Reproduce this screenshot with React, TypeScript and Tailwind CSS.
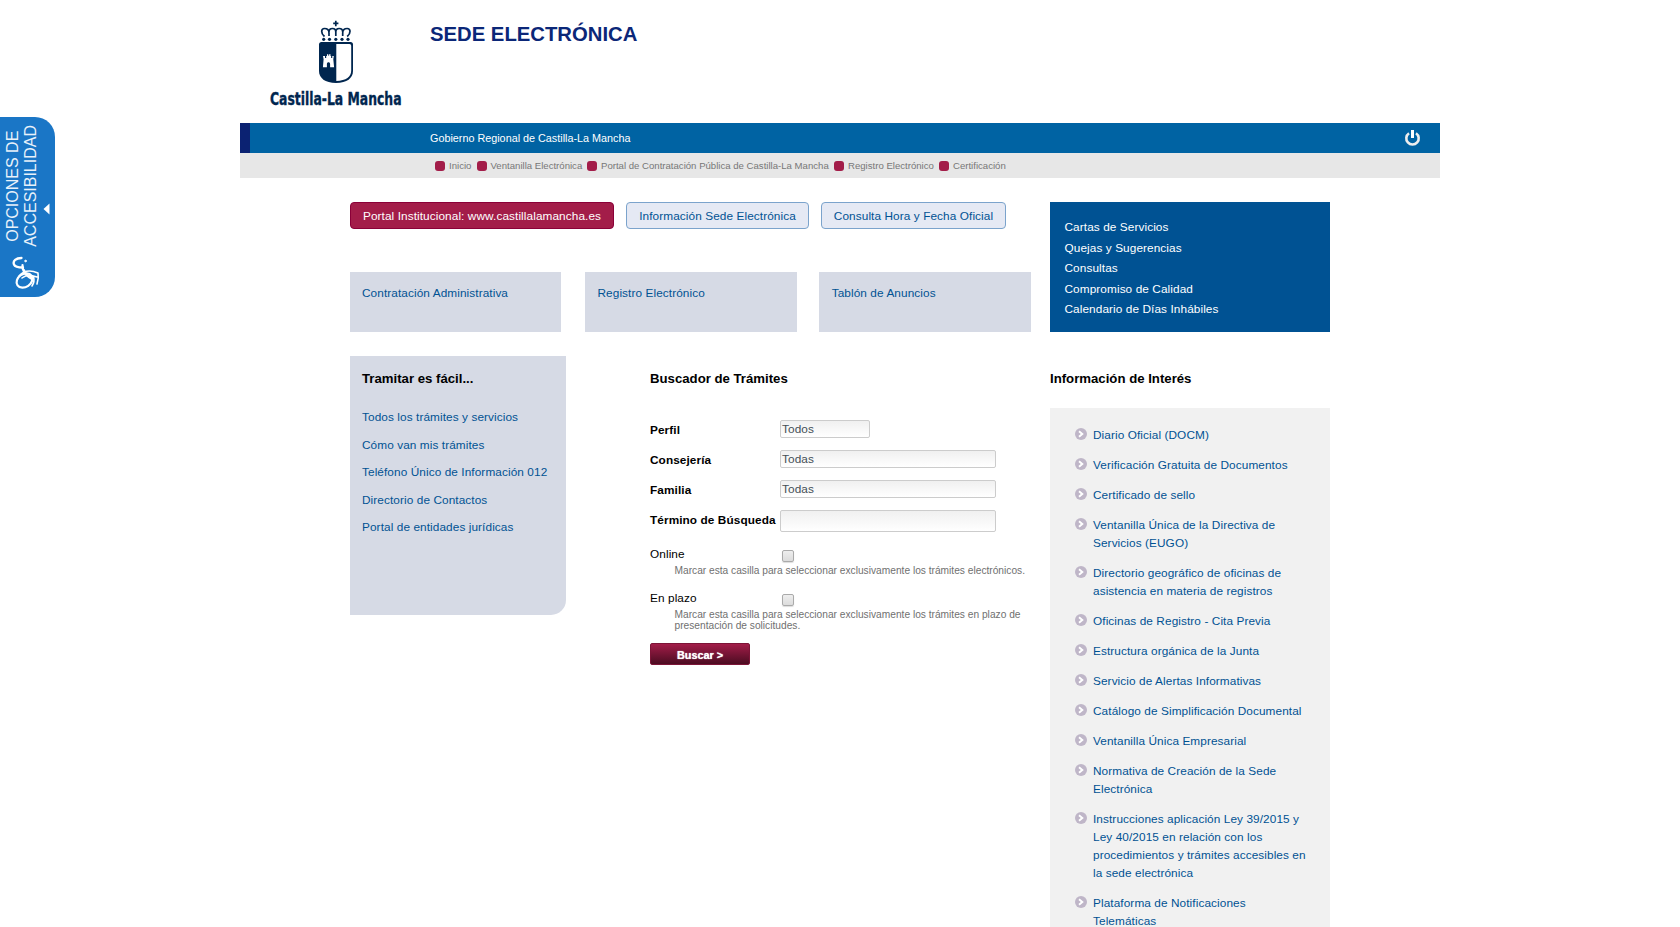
import React from "react";

const crumbs = [
  { label: "Inicio", width: "w-[41.5px]" },
  { label: "Ventanilla Electrónica", width: "w-[110.5px]" },
  { label: "Portal de Contratación Pública de Castilla-La Mancha", width: "w-[247px]" },
  { label: "Registro Electrónico", width: "w-[105px]" },
  { label: "Certificación", width: "w-[80px]" },
];

const services = [
  "Cartas de Servicios",
  "Quejas y Sugerencias",
  "Consultas",
  "Compromiso de Calidad",
  "Calendario de Días Inhábiles",
];

const easyLinks = [
  "Todos los trámites y servicios",
  "Cómo van mis trámites",
  "Teléfono Único de Información 012",
  "Directorio de Contactos",
  "Portal de entidades jurídicas",
];

const interestLinks = [
  ["Diario Oficial (DOCM)"],
  ["Verificación Gratuita de Documentos"],
  ["Certificado de sello"],
  ["Ventanilla Única de la Directiva de", "Servicios (EUGO)"],
  ["Directorio geográfico de oficinas de", "asistencia en materia de registros"],
  ["Oficinas de Registro - Cita Previa"],
  ["Estructura orgánica de la Junta"],
  ["Servicio de Alertas Informativas"],
  ["Catálogo de Simplificación Documental"],
  ["Ventanilla Única Empresarial"],
  ["Normativa de Creación de la Sede", "Electrónica"],
  [
    "Instrucciones aplicación Ley 39/2015 y",
    "Ley 40/2015 en relación con los",
    "procedimientos y trámites accesibles en",
    "la sede electrónica",
  ],
  ["Plataforma de Notificaciones", "Telemáticas"],
];

function Logo() {
  return (
    <svg width="140" height="95" viewBox="265 15 140 95" className="block overflow-visible">
      <g fill="none" stroke="#00264f" strokeWidth="1.700">
        <path d="M335.800 20.700v5.500M333.200 23.300h5.200" />
        <path d="M324.500 36.500c-4-3.500-3.500-8 0-8s4.500 2 4.500 4.500V36M329 32c0-2.500 1-3.500 3.500-3.500s3.300 1 3.300 3.500v4M347.200 36.500c4-3.500 3.500-8 0-8s-4.500 2-4.500 4.500V36M342.700 32c0-2.500-1-3.500-3.500-3.500s-3.400 1-3.400 3.500" />
      </g>
      <g fill="#00264f">
        <circle cx="323.700" cy="39.300" r="1.600" />
        <circle cx="329.500" cy="39.300" r="1.600" />
        <circle cx="335.800" cy="39.300" r="1.600" />
        <circle cx="342" cy="39.300" r="1.600" />
        <circle cx="348" cy="39.300" r="1.600" />
        <path d="M321.500 42h29a2.500 2.500 0 0 1 2.500 2.500V71c0 7-6 12-17 12s-17-5-17-12V44.500a2.500 2.500 0 0 1 2.500-2.500z" />
      </g>
      <path
        d="M336.300 44h13.200a1.700 1.700 0 0 1 1.700 1.700V70.500c0 6-5 10.300-14.900 10.500z"
        fill="#fff"
      />
      <path
        d="M323 56h2v2h1.200v-2h.8v-1.800h1.300v1.500h.8v-1.500h1.400V56h.6v2h1.200v-2h1.500l-.5 3.200.8 8h-4V64c0-2.200-3.200-2.200-3.200 0v3.200h-4l.7-8z"
        fill="#fff"
      />
      <text
        x="270"
        y="104.600"
        textLength="131.500"
        lengthAdjust="spacingAndGlyphs"
        fill="#00264f"
        stroke="#00264f"
        strokeWidth="0.350"
        fontFamily="'DejaVu Sans Condensed', 'DejaVu Sans', sans-serif"
        fontWeight="700"
        fontSize="17"
      >
        Castilla-La Mancha
      </text>
    </svg>
  );
}

function Bullet() {
  return (
    <svg width="12" height="12" viewBox="0 0 12 12" className="mt-[2px] block shrink-0">
      <circle cx="6" cy="6" r="6" fill="#bfb6c8" />
      <path d="M4 3.300 7.300 6 4 8.700" fill="none" stroke="#fff" strokeWidth="1.900" />
    </svg>
  );
}

function Field({ label, value, size }: { label: string; value: string; size: string }) {
  return (
    <div className="flex h-[30px] items-start">
      <div className="w-[130px] pt-[1px] leading-[18px] font-bold whitespace-nowrap">{label}</div>
      <div
        className={`${size} rounded-[2px] border border-[#ccc] bg-linear-to-b from-[#f0f0f0] to-white pl-[1px] leading-[16px] text-[#444f56]`}
      >
        {value}
      </div>
    </div>
  );
}

function CheckRow({ label, lines }: { label: string; lines: string[] }) {
  return (
    <div className="h-[44px]">
      <div className="flex h-[18px] items-start leading-[18px]">
        <span className="w-[132px]">{label}</span>
        <span className="mt-[5px] block h-[12px] w-[12px] rounded-[2px] border border-[#aaa] bg-linear-to-b from-[#eee] to-[#dcdcdc] shadow-[0_1px_1px_#ddd]" />
      </div>
      <div className="pt-[2px] pl-[24.500px] text-[10.200px] leading-[11px] tracking-normal whitespace-nowrap text-[#707070]">
        {lines.map((l) => (
          <div key={l}>{l}</div>
        ))}
      </div>
    </div>
  );
}

function AccessibilityTab() {
  return (
    <aside className="absolute top-[116.500px] left-0 flex h-[180.500px] w-[55px] flex-col items-center rounded-r-[20px] bg-[#1a76c6] tracking-normal text-white">
      <div className="flex h-[138px] w-full items-center pl-[4px]">
        <div className="rotate-180 text-center text-[16px] leading-[18px] whitespace-nowrap text-[#e8f1fa] [writing-mode:vertical-rl]">
          OPCIONES DE
          <br />
          ACCESIBILIDAD
        </div>
        <svg width="7" height="12" viewBox="0 0 7 12" className="mt-[46px] ml-[3px] shrink-0">
          <path d="M6.500 0.500v11L0.500 6z" fill="#fff" />
        </svg>
      </div>
      <svg width="28" height="34" viewBox="0 0 28 34" className="mt-[1px] -ml-[3px]" fill="none" stroke="#fff" strokeLinecap="round">
        <path d="M9.500 2C4 2 .5 5 2 8.500c1 2.500 4 3 9 3" strokeWidth="2.300" />
        <path d="M10.500 9C10 14 12 18 19 21M12 14c1 4 4 7 8 9" strokeWidth="2.200" />
        <ellipse cx="12.500" cy="24.500" rx="8.500" ry="6.500" transform="rotate(-35 12.500 24.500)" strokeWidth="2.200" />
        <path d="M7 20c5-6 12-6 19-3M10 22c5-4 9-3 15-1M26 17c.8 4 .3 7-1 11M21.500 21c1 3 .5 6-1.500 9" strokeWidth="1.600" />
        <circle cx="13.500" cy="5" r=".8" fill="#fff" strokeWidth="1" />
      </svg>
    </aside>
  );
}

export default function App() {
  return (
    <div className="relative h-[927px] w-full overflow-hidden bg-white font-['Liberation_Sans',Arial,sans-serif] text-[11.800px] tracking-[0.090px] text-black [font-feature-settings:'liga'_1]">
      <AccessibilityTab />
      <div className="mx-auto w-[1200px]">
        <header className="flex h-[123px] items-start pt-[15px] pl-[25px] tracking-normal">
          <Logo />
          <h1 className="mt-[7px] ml-[25px] text-[20.300px] leading-[24px] font-bold whitespace-nowrap text-[#0b2778]">
            SEDE ELECTRÓNICA
          </h1>
        </header>

        <div className="flex h-[30px] items-center justify-between border-l-[10px] border-[#0b2272] bg-[#0063a3] pr-[19px] pl-[180px] text-[10.800px] tracking-normal text-white">
          <span>Gobierno Regional de Castilla-La Mancha</span>
          <svg width="17" height="18" viewBox="0 0 17 18" fill="none" stroke="#eee">
            <path d="M5 4.200a6.200 6.200 0 1 0 7 0" strokeWidth="2.600" />
            <path d="M8.500 1v8" strokeWidth="3" stroke="#fff" />
          </svg>
        </div>

        <nav className="flex h-[25px] items-center bg-[#e7e7e7] pt-[1px] pl-[195px] text-[9.600px] tracking-normal text-[#777]">
          {crumbs.map((c) => (
            <span key={c.label} className={`${c.width} flex items-center gap-[4px] whitespace-nowrap`}>
              <i className="block h-[10px] w-[10px] shrink-0 rounded-[3px] bg-[#a31d49]" />
              {c.label}
            </span>
          ))}
        </nav>

        <main className="pt-[24px] pl-[110px]">
          <div className="flex h-[130px]">
            <div className="flex w-[700px] flex-col justify-between">
              <div className="flex gap-[12px] leading-[18px] whitespace-nowrap">
                <a className="h-[27px] w-[264px] rounded-[4px] border border-[#8a0038] bg-[#a31d49] pt-[4px] text-center text-white">
                  Portal Institucional: www.castillalamancha.es
                </a>
                <a className="h-[27px] w-[183px] rounded-[4px] border border-[#7ba3cc] bg-[#e5e9f4] pt-[4px] text-center text-[#005293]">
                  Información Sede Electrónica
                </a>
                <a className="h-[27px] w-[185px] rounded-[4px] border border-[#7ba3cc] bg-[#e5e9f4] pt-[4px] text-center text-[#005293]">
                  Consulta Hora y Fecha Oficial
                </a>
              </div>
              <div className="flex leading-[18px] text-[#005293]">
                <div className="mr-[24px] h-[60px] w-[211px] bg-[#d6dae5] p-[12px]">Contratación Administrativa</div>
                <div className="mr-[22px] h-[60px] w-[212px] bg-[#d6dae5] py-[12px] pl-[12.500px]">Registro Electrónico</div>
                <div className="h-[60px] w-[212px] bg-[#d6dae5] py-[12px] pl-[12.700px]">Tablón de Anuncios</div>
              </div>
            </div>
            <ul className="w-[280px] bg-[#005293] pt-[15px] pl-[14.500px] leading-[20.500px] text-white">
              {services.map((s) => (
                <li key={s}>{s}</li>
              ))}
            </ul>
          </div>

          <div className="mt-[24px] flex items-start">
            <section className="h-[259px] w-[216px] rounded-br-[15px] bg-[#d6dae5] pt-[14px] pl-[12px]">
              <h2 className="text-[13.200px] leading-[18px] font-bold tracking-normal">Tramitar es fácil...</h2>
              <ul className="mt-[16px] leading-[27.500px] whitespace-nowrap text-[#005293]">
                {easyLinks.map((l) => (
                  <li key={l}>{l}</li>
                ))}
              </ul>
            </section>

            <section className="ml-[84px] w-[400px] pt-[14px]">
              <h2 className="h-[50px] text-[13.200px] leading-[18px] font-bold tracking-normal">Buscador de Trámites</h2>
              <Field label="Perfil" value="Todos" size="h-[18px] w-[90px]" />
              <Field label="Consejería" value="Todas" size="h-[18px] w-[216px]" />
              <Field label="Familia" value="Todas" size="h-[18px] w-[216px]" />
              <Field label="Término de Búsqueda" value="" size="h-[22px] w-[216px]" />
              <div className="mt-[5px]">
                <CheckRow
                  label="Online"
                  lines={["Marcar esta casilla para seleccionar exclusivamente los trámites electrónicos."]}
                />
                <CheckRow
                  label="En plazo"
                  lines={[
                    "Marcar esta casilla para seleccionar exclusivamente los trámites en plazo de",
                    "presentación de solicitudes.",
                  ]}
                />
              </div>
              <button className="mt-[10px] block h-[22px] w-[100px] rounded-[2px] border border-[#7c1437] bg-linear-to-b from-[#a31d49] to-[#4d0c22] pt-[2px] text-[10.800px] leading-[19px] font-bold tracking-normal text-white [text-shadow:0_0_1px_#fff]">
                Buscar &gt;
              </button>
            </section>

            <section className="w-[280px] pt-[14px]">
              <h2 className="h-[38px] text-[13.200px] leading-[18px] font-bold tracking-normal">Información de Interés</h2>
              <ul className="flex h-[540px] flex-col gap-[12px] bg-[#f1f1f1] pt-[18px] pl-[25px] leading-[18px] whitespace-nowrap text-[#005293]">
                {interestLinks.map((lines) => (
                  <li key={lines[0]} className="flex items-start gap-[6px]">
                    <Bullet />
                    <span>
                      {lines.map((l) => (
                        <span key={l} className="block">
                          {l}
                        </span>
                      ))}
                    </span>
                  </li>
                ))}
              </ul>
            </section>
          </div>
        </main>
      </div>
    </div>
  );
}
